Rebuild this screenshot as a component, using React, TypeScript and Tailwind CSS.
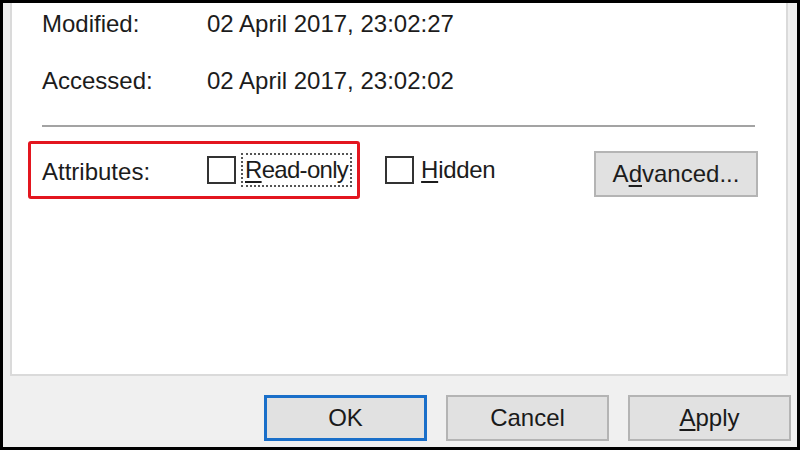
import React from "react";

const font = { fontFamily: '"Liberation Sans", Arial, sans-serif' };

function CheckBox() {
  return <div className="w-[29px] h-[28px] shrink-0 border-2 border-[#333333] bg-white" />;
}

function DialogButton({ children, primary }: { children: React.ReactNode; primary?: boolean }) {
  return (
    <div
      className={
        "w-[163px] h-[46px] flex items-center justify-center bg-[#e1e1e1] text-[24px] leading-[28px] text-[#1a1a1a] " +
        (primary ? "border-[3px] border-[#1a6fc9]" : "border-2 border-[#b4b4b4]")
      }
    >
      {children}
    </div>
  );
}

export default function App() {
  return (
    <div className="w-[800px] h-[450px] bg-black border-[3px] border-black" style={font}>
      <div className="w-full h-full bg-[#f0f0f0] flex flex-col">
        {/* tab page */}
        <div className="ml-[7px] mr-[9px] h-[373px] bg-white border-x-2 border-b-2 border-[#dadada] flex flex-col pt-[7px] text-[24px] leading-[28px] text-[#1c1c1c]">
          <div className="flex h-[28px] pl-[30px]">
            <div className="w-[165px]">Modified:</div>
            <div>02 April 2017, 23:02:27</div>
          </div>
          <div className="flex h-[28px] pl-[30px] mt-[29px]">
            <div className="w-[165px]">Accessed:</div>
            <div>02 April 2017, 23:02:02</div>
          </div>
          <div className="ml-[30px] mr-[31px] mt-[30px] h-[2px] bg-[#a3a3a3]" />

          <div className="flex items-center mt-[14px]">
            <div className="ml-[16px] h-[58px] flex items-center border-[3px] border-[#e3161f] rounded-[3px] pl-[11px] pr-[5px]">
              <div className="w-[165px] pt-[3px]">Attributes:</div>
              <CheckBox />
              <div className="ml-[5px] h-[34px] px-[2px] flex items-center border-2 border-dotted border-[#555555]">
                <span className="tracking-[-0.7px]"><span className="underline underline-offset-[3px]">R</span>ead-only</span>
              </div>
            </div>
            <div className="ml-[25px] flex items-center gap-[7px]">
              <CheckBox />
              <span className="tracking-[-0.3px]"><span className="underline underline-offset-[3px]">H</span>idden</span>
            </div>
            <div className="ml-auto mr-[28px] mt-[7px] w-[164px] h-[46px] flex items-center justify-center bg-[#e1e1e1] border-2 border-[#b4b4b4]">
              <span>A<span className="underline underline-offset-[3px]">d</span>vanced...</span>
            </div>
          </div>
        </div>

        {/* bottom buttons */}
        <div className="flex justify-end gap-[19px] pr-[6px] pt-[19px]">
          <DialogButton primary>OK</DialogButton>
          <DialogButton>Cancel</DialogButton>
          <DialogButton>
            <span><span className="underline underline-offset-[3px]">A</span>pply</span>
          </DialogButton>
        </div>
      </div>
    </div>
  );
}
